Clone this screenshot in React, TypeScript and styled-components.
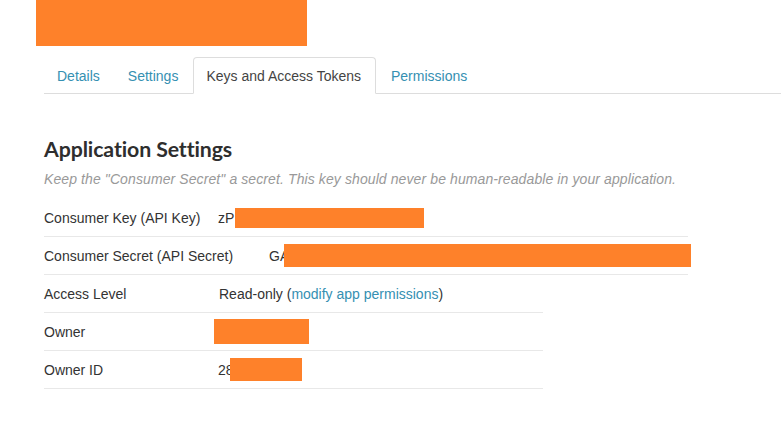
import React from "react";
import styled, { createGlobalStyle } from "styled-components";

const Global = createGlobalStyle`
  html, body { margin: 0; padding: 0; background: #fff; }
  body { font-family: "Liberation Sans", Arial, sans-serif; color: #333; }
`;

const Page = styled.div`
  width: 781px;
  height: 436px;
  overflow: hidden;
  background: #fff;
`;

const Redact = styled.span<{ $w: number; $h: number }>`
  display: inline-block;
  width: ${(p) => p.$w}px;
  height: ${(p) => p.$h}px;
  background: #fe812a;
  vertical-align: middle;
`;

const Banner = styled.div`
  margin-left: 36px;
  width: 271px;
  height: 46px;
  background: #fe812a;
`;

const Content = styled.div`
  margin-left: 44px;
`;

const Tabs = styled.ul`
  list-style: none;
  margin: 11px 0 0;
  padding: 0;
  display: flex;
  border-bottom: 1px solid #ddd;
`;

const Tab = styled.li<{ $active?: boolean }>`
  margin-right: 2px;
  margin-bottom: -1px;
  padding: 10px ${(p) => (p.$active ? 14 : 12)}px 9px 12px;
  font-size: 14px;
  line-height: 16px;
  color: ${(p) => (p.$active ? "#444" : "#3590b2")};
  border: 1px solid ${(p) => (p.$active ? "#ddd" : "transparent")};
  border-bottom-color: ${(p) => (p.$active ? "#fff" : "transparent")};
  border-radius: 4px 4px 0 0;
  background: ${(p) => (p.$active ? "#fff" : "transparent")};
`;

const Heading = styled.h2`
  margin: 41px 0 0;
  font-family: Lato, "Open Sans", sans-serif;
  font-weight: 700;
  font-size: 21.3px;
  line-height: 28px;
  color: #2e2e2e;
  letter-spacing: -0.1px;
`;

const Hint = styled.p`
  margin: 7px 0 0;
  font-size: 14px;
  line-height: 18px;
  font-style: italic;
  color: #999;
  letter-spacing: 0.1px;
`;

const Table = styled.div<{ $w: number }>`
  width: ${(p) => p.$w}px;
`;

const Row = styled.div<{ $label: number }>`
  display: grid;
  grid-template-columns: ${(p) => p.$label}px 1fr;
  align-items: center;
  height: 37px;
  border-bottom: 1px solid #e8e8e8;
  font-size: 14px;
  color: #333;
  white-space: nowrap;
`;

const Value = styled.div`
  display: flex;
  align-items: center;
`;

const Link = styled.a`
  color: #3590b2;
  text-decoration: none;
`;

export default function App() {
  return (
    <Page>
      <Global />
      <Banner />
      <Content>
        <Tabs>
          <Tab>Details</Tab>
          <Tab>Settings</Tab>
          <Tab $active>Keys and Access Tokens</Tab>
          <Tab>Permissions</Tab>
        </Tabs>
        <Heading>Application Settings</Heading>
        <Hint>
          Keep the "Consumer Secret" a secret. This key should never be human-readable in your
          application.
        </Hint>
        <Table $w={644} style={{ marginTop: 11 }}>
          <Row $label={174}>
            <span>Consumer Key (API Key)</span>
            <Value>
              zP<Redact $w={189} $h={20} style={{ marginLeft: 1 }} />
            </Value>
          </Row>
          <Row $label={225}>
            <span>Consumer Secret (API Secret)</span>
            <Value>
              GA<Redact $w={407} $h={23} style={{ marginLeft: -5 }} />
            </Value>
          </Row>
        </Table>
        <Table $w={499}>
          <Row $label={175}>
            <span>Access Level</span>
            <Value>
              Read-only (<Link href="#">modify app permissions</Link>)
            </Value>
          </Row>
          <Row $label={170}>
            <span>Owner</span>
            <Value>
              <Redact $w={95} $h={25} />
            </Value>
          </Row>
          <Row $label={174}>
            <span>Owner ID</span>
            <Value>
              28<Redact $w={72} $h={23} style={{ marginLeft: -4 }} />
            </Value>
          </Row>
        </Table>
      </Content>
    </Page>
  );
}
